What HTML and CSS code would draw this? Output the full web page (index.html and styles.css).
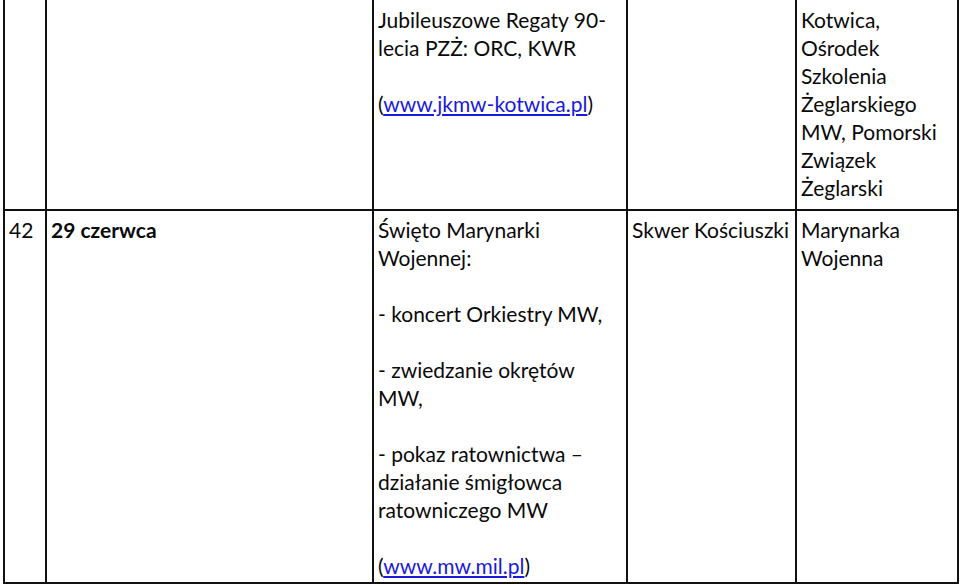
FILE: index.html
```html
<!DOCTYPE html>
<html lang="pl">
<head>
<meta charset="utf-8">
<title>Harmonogram</title>
<link rel="stylesheet" href="styles.css">
</head>
<body>
<table class="events">
  <colgroup>
    <col class="c-no">
    <col class="c-date">
    <col class="c-event">
    <col class="c-place">
    <col class="c-org">
  </colgroup>
  <tr class="row-first">
    <td></td>
    <td></td>
    <td>
      <p>Jubileuszowe Regaty 90-<br>lecia PZŻ: ORC, KWR</p>
      <p>(<a href="#">www.jkmw-kotwica.pl</a>)</p>
    </td>
    <td></td>
    <td>
      <p>Kotwica,<br>Ośrodek<br>Szkolenia<br>Żeglarskiego<br>MW, Pomorski<br>Związek<br>Żeglarski</p>
    </td>
  </tr>
  <tr class="row-second">
    <td>42</td>
    <td class="date">29 czerwca</td>
    <td>
      <p>Święto Marynarki<br>Wojennej:</p>
      <p>- koncert Orkiestry MW,</p>
      <p>- zwiedzanie okrętów<br>MW,</p>
      <p>- pokaz ratownictwa –<br>działanie śmigłowca<br>ratowniczego MW</p>
      <p>(<a href="#">www.mw.mil.pl</a>)</p>
    </td>
    <td><p>Skwer Kościuszki</p></td>
    <td><p>Marynarka<br>Wojenna</p></td>
  </tr>
</table>
</body>
</html>
```

FILE: styles.css
```css
html, body {
  margin: 0;
  padding: 0;
  background: #ffffff;
}

body {
  font-family: "Lato", "Open Sans", sans-serif;
  font-size: 21px;
  line-height: 28px;
  color: #0a0a0a;
}

.events {
  margin-left: 3px;
  width: 954px;
  table-layout: fixed;
  border-collapse: collapse;
}

.c-no { width: 42px; }
.c-date { width: 327px; }
.c-event { width: 254px; }
.c-place { width: 169px; }
.c-org { width: 162px; }

.events td {
  border: 2px solid #111111;
  vertical-align: top;
  padding: 6px 4px 6px 4px;
  white-space: nowrap;
}

.row-first td {
  border-top: none;
  padding-bottom: 7px;
}

.row-second td {
  padding-top: 5px;
  padding-bottom: 2px;
}

.events p {
  margin: 0 0 28px 0;
}

.events p:last-child {
  margin-bottom: 0;
}

.date {
  font-weight: bold;
}

.events a {
  color: #1a1adb;
  text-decoration: underline;
}
```
